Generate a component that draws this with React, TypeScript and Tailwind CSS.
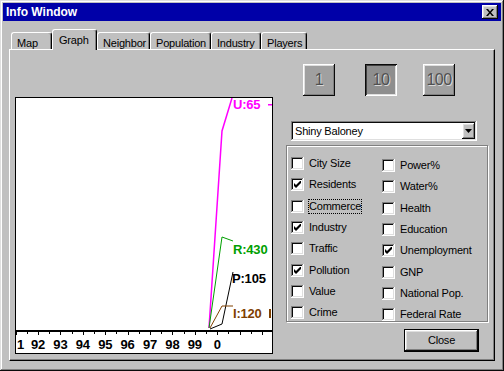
import React from 'react';

const raised =
  'shadow-[inset_-1px_-1px_#0a0a0a,inset_1px_1px_#ffffff,inset_-2px_-2px_#808080,inset_2px_2px_#dfdfdf]';
const sunken =
  'shadow-[inset_-1px_-1px_#ffffff,inset_1px_1px_#808080,inset_-2px_-2px_#dfdfdf,inset_2px_2px_#0a0a0a]';

const tabs = [
  { label: 'Map', w: 'w-[41px]' },
  { label: 'Graph', w: 'w-[45px]', active: true },
  { label: 'Neighbor', w: 'w-[53px]' },
  { label: 'Population', w: 'w-[61px]' },
  { label: 'Industry', w: 'w-[50px]' },
  { label: 'Players', w: 'w-[46px]' },
];

const left = [
  { label: 'City Size' },
  { label: 'Residents', checked: true },
  { label: 'Commerce', focus: true },
  { label: 'Industry', checked: true },
  { label: 'Traffic' },
  { label: 'Pollution', checked: true },
  { label: 'Value' },
  { label: 'Crime' },
];

const right = [
  { label: 'Power%' },
  { label: 'Water%' },
  { label: 'Health' },
  { label: 'Education' },
  { label: 'Unemployment', checked: true },
  { label: 'GNP' },
  { label: 'National Pop.' },
  { label: 'Federal Rate' },
];

// first year label only shows its last digit at the left edge
const years = ['92', '93', '94', '95', '96', '97', '98', '99', '0'];

type Item = { label: string; checked?: boolean; focus?: boolean };

function CheckRow({ label, checked, focus }: Item) {
  return (
    <div className="flex items-center h-[21.3px]">
      <span className={`w-[13px] h-[13px] bg-white flex items-center justify-center shrink-0 ${sunken}`}>
        {checked && (
          <svg width="7" height="7" viewBox="0 0 7 7">
            <path d="M0 2L2 4L7 -1V2L2 7L0 5Z" fill="#000" />
          </svg>
        )}
      </span>
      <span
        className={`ml-[4px] leading-[13px] border ${focus ? 'border-dotted border-black' : 'border-transparent'}`}
      >
        {label}
      </span>
    </div>
  );
}

function Chart() {
  const ticks = Array.from({ length: 24 }, (_, i) => -0.4 + i * 11.2);
  return (
    <div className="w-[258px] h-[257px] border border-black bg-white overflow-hidden">
      <svg width="256" height="255" viewBox="0 0 256 255" className="block">
        <polyline points="193,230 206,33 216,0" fill="none" stroke="#ff00ff" strokeWidth="1.5" />
        <polyline points="193,230 206,139 217,143" fill="none" stroke="#00a000" strokeWidth="1" />
        <polyline points="194,231 206,226 217,174" fill="none" stroke="#000" strokeWidth="1" />
        <polyline points="194,230 206,208 217,208" fill="none" stroke="#804000" strokeWidth="1" />
        <g fontFamily="'Liberation Sans', Arial, sans-serif" fontWeight="bold" fontSize="13">
          <text x="217" y="11" fill="#ff00ff">U:65</text>
          <rect x="252" y="6" width="4" height="1.5" fill="#ff00ff" />
          <text x="217" y="156" fill="#00a000">R:430</text>
          <text x="216" y="185" fill="#000">P:105</text>
          <text x="217" y="220" fill="#804000">I:120</text>
          <rect x="253" y="211" width="2" height="9" fill="#804000" />
        </g>
        <rect x="0" y="232" width="256" height="2" fill="#000" />
        {ticks.map((x, i) => (
          <rect key={i} x={Math.round(x)} y="234" width="1" height={i % 2 === 0 ? 3 : 2} fill="#000" />
        ))}
        <g fontFamily="'Liberation Sans', Arial, sans-serif" fontWeight="bold" fontSize="13" fill="#000">
          <text x="1" y="251">1</text>
          {years.map((y, i) => (
            <text key={y} x={22 + i * 22.4} y="251" textAnchor="middle">
              {y}
            </text>
          ))}
        </g>
      </svg>
    </div>
  );
}

function ScaleButton({ label, pressed, className }: { label: string; pressed?: boolean; className: string }) {
  return (
    <div
      className={`w-[32px] h-[32px] flex items-center justify-center text-[16px] tracking-[-0.5px] ${className} ${
        pressed
          ? 'bg-[#8e8e8e] shadow-[inset_1px_1px_#0a0a0a,inset_-1px_-1px_#ffffff,inset_2px_2px_#404040,inset_-2px_-2px_#dfdfdf]'
          : `bg-[#a0a0a0] ${raised}`
      }`}
    >
      <span className="text-[#505050] [text-shadow:1px_1px_0_#d8d8d8]">{label}</span>
    </div>
  );
}

export default function App() {
  return (
    <div
      className={`w-[504px] h-[371px] bg-[#c0c0c0] p-[3px] flex flex-col text-[11px] tracking-[-0.2px] text-black font-['Liberation_Sans',Arial,sans-serif] shadow-[inset_-1px_-1px_#0a0a0a,inset_1px_1px_#dfdfdf,inset_-2px_-2px_#808080,inset_2px_2px_#ffffff]`}
    >
      <div className="h-[18px] bg-[#0000a8] flex items-center justify-between pl-[3px] pr-[3px]">
        <span className="text-white font-bold text-[12px] tracking-normal">Info Window</span>
        <div className={`w-[16px] h-[14px] bg-[#c0c0c0] flex items-center justify-center ${raised}`}>
          <svg width="8" height="7" viewBox="0 0 8 7">
            <path d="M0 0H2L4 2.4L6 0H8L5 3.5L8 7H6L4 4.6L2 7H0L3 3.5Z" fill="#000" />
          </svg>
        </div>
      </div>

      <div className="mt-[8px] ml-[8px] h-[20px] flex items-end">
        {tabs.map(t =>
          t.active ? (
            <div
              key={t.label}
              className={`${t.w} h-[21px] -mb-[1px] relative z-10 bg-[#c0c0c0] border-l border-t border-white border-r border-r-black rounded-t-[3px] shadow-[inset_-1px_0_#808080] pl-[6px] pt-[2px]`}
            >
              {t.label}
            </div>
          ) : (
            <div
              key={t.label}
              className={`${t.w} h-[17px] bg-[#c0c0c0] border-l border-t border-white border-r border-r-black rounded-t-[3px] shadow-[inset_-1px_0_#808080] pl-[5px] pt-[2px]`}
            >
              {t.label}
            </div>
          )
        )}
      </div>

      <div className="mx-[6px] mb-[7px] flex-1 flex items-start border-t border-l border-white border-r border-b border-r-black border-b-black shadow-[inset_-1px_-1px_#808080]">
        <div className="ml-[5px] mt-[47px]">
          <Chart />
        </div>

        <div className="ml-[13px] mt-[14px] w-[202px]">
          <div className="flex h-[32px]">
            <ScaleButton label="1" className="ml-[17px]" />
            <ScaleButton label="10" pressed className="ml-[30px]" />
            <ScaleButton label="100" className="ml-[26px]" />
          </div>

          <div className={`mt-[25px] ml-[5px] w-[186px] h-[20px] bg-white flex items-center justify-between p-[2px] ${sunken}`}>
            <span className="pl-[2px]">Shiny Baloney</span>
            <div className={`w-[13px] h-[16px] bg-[#c0c0c0] flex items-center justify-center ${raised}`}>
              <svg width="7" height="4" viewBox="0 0 7 4">
                <path d="M0 0H7L3.5 4Z" fill="#000" />
              </svg>
            </div>
          </div>

          <div className="mt-[4px] w-[202px] h-[177px] border border-[#808080] shadow-[inset_1px_1px_#ffffff,1px_1px_#ffffff] flex">
            <div className="w-[95px] pl-[4px] pt-[7px]">
              {left.map(i => (
                <CheckRow key={i.label} {...i} />
              ))}
            </div>
            <div className="pt-[9px]">
              {right.map(i => (
                <CheckRow key={i.label} {...i} />
              ))}
            </div>
          </div>

          <div className="mt-[7px] ml-[118px] w-[75px] h-[23px] border border-black">
            <div className={`w-full h-full flex items-center justify-center ${raised}`}>Close</div>
          </div>
        </div>
      </div>
    </div>
  );
}
